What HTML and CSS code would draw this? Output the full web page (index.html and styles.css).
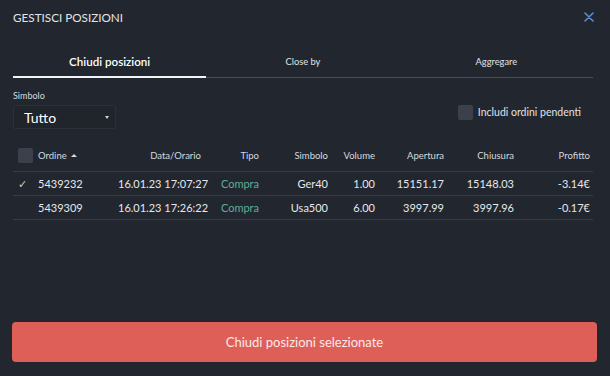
FILE: index.html
```html
<!DOCTYPE html>
<html lang="it">
<head>
    <meta charset="UTF-8">
    <meta name="viewport" content="width=device-width, initial-scale=1.0">
    <title>Gestisci posizioni</title>
    <link rel="stylesheet" href="styles.css">
</head>
<body>
    <div class="modal">
        <div class="header">
            <h2>GESTISCI POSIZIONI</h2>
            <svg class="close" width="10" height="10" viewBox="0 0 10 10"><path d="M1 1L9 9M9 1L1 9" stroke="#5b8ed4" stroke-width="1.6" stroke-linecap="round"/></svg>
        </div>

        <div class="tabs">
            <div class="tab active">Chiudi posizioni</div>
            <div class="tab">Close by</div>
            <div class="tab">Aggregare</div>
        </div>

        <div class="filters">
            <div class="field">
                <label>Simbolo</label>
                <div class="select">Tutto <span class="caret"></span></div>
            </div>
            <div class="pending"><span class="box"></span>Includi ordini pendenti</div>
        </div>

        <div class="grid head">
            <div><span class="box"></span></div>
            <div class="left">Ordine <span class="sort"></span></div>
            <div>Data/Orario</div>
            <div>Tipo</div>
            <div>Simbolo</div>
            <div>Volume</div>
            <div>Apertura</div>
            <div>Chiusura</div>
            <div>Profitto</div>
        </div>
        <div class="grid row">
            <div class="check">&#10003;</div>
            <div class="left">5439232</div>
            <div>16.01.23 17:07:27</div>
            <div class="buy">Compra</div>
            <div>Ger40</div>
            <div>1.00</div>
            <div>15151.17</div>
            <div>15148.03</div>
            <div>-3.14€</div>
        </div>
        <div class="grid row">
            <div></div>
            <div class="left">5439309</div>
            <div>16.01.23 17:26:22</div>
            <div class="buy">Compra</div>
            <div>Usa500</div>
            <div>6.00</div>
            <div>3997.99</div>
            <div>3997.96</div>
            <div>-0.17€</div>
        </div>

        <button type="button">Chiudi posizioni selezionate</button>
    </div>
</body>
</html>
```

FILE: styles.css
```css
body { margin: 0; background: #22262e; color: #e4e6ea; font-family: Lato, "Liberation Sans", sans-serif; }
.modal { width: 610px; height: 376px; box-sizing: border-box; padding: 0 17px 0 13px; display: flex; flex-direction: column; }
.header { display: flex; justify-content: space-between; align-items: center; height: 34px; }
.header h2 { margin: 0; font-size: 11.7px; font-weight: 400; color: #e2e4e8; }
.close { margin-right: -1px; }
.tabs { display: flex; margin-top: 20px; border-bottom: 1px solid #4a4e57; }
.tab { flex: 1; text-align: center; font-size: 9.3px; color: #e0e2e6; padding-bottom: 8px; line-height: 15px; }
.tab.active { font-size: 11.6px; font-weight: 600; color: #fff; border-bottom: 2px solid #f2f3f5; margin-bottom: -1px; padding-bottom: 7px; }
.filters { display: flex; justify-content: space-between; margin-top: 12px; }
.field label { display: block; font-size: 9px; color: #d8dadf; line-height: 11px; }
.select { width: 103px; height: 24px; box-sizing: border-box; margin-top: 4px; border: 1px solid #2b2f38; border-radius: 2px; background: #20242b; display: flex; justify-content: space-between; align-items: center; padding: 0 6px 0 10px; font-size: 14px; color: #fff; }
.caret { width: 0; height: 0; border-left: 2.5px solid transparent; border-right: 2.5px solid transparent; border-top: 3px solid #cfd2d8; }
.pending { display: flex; align-items: center; font-size: 10.5px; color: #e0e2e6; margin-top: 14px; margin-right: 12px; height: 16px; }
.box { display: inline-block; width: 15px; height: 15px; border-radius: 2px; background: #3b404a; margin-right: 5px; vertical-align: middle; }
.grid { display: grid; grid-template-columns: 25px 80px 83px 58px 69px 47px 69px 70px 76px; padding-right: 3px; align-items: center; text-align: right; white-space: nowrap; box-sizing: border-box; }
.grid .left { text-align: left; }
.head { margin-top: 13px; height: 30px; padding-bottom: 3px; font-size: 9.5px; color: #d6d9de; border-bottom: 1px solid #383c45; }
.head .box { margin-left: 4px; }
.sort { display: inline-block; width: 0; height: 0; border-left: 3px solid transparent; border-right: 3px solid transparent; border-bottom: 3.5px solid #d6d9de; margin-left: 2px; vertical-align: 2px; }
.row { height: 24px; font-size: 11px; color: #e6e8eb; border-bottom: 1px solid #383c45; }
.check { text-align: left; padding-left: 5px; font-size: 11px; color: #c9ccd2; }
.buy { color: #5eae95; }
button { margin-top: auto; margin-bottom: 14px; margin-left: -1px; margin-right: -4px; height: 40px; border: none; border-radius: 4px; background: #de5e58; color: #fbe9e7; font-family: Lato, "Liberation Sans", sans-serif; font-size: 13px; cursor: pointer; }
```
